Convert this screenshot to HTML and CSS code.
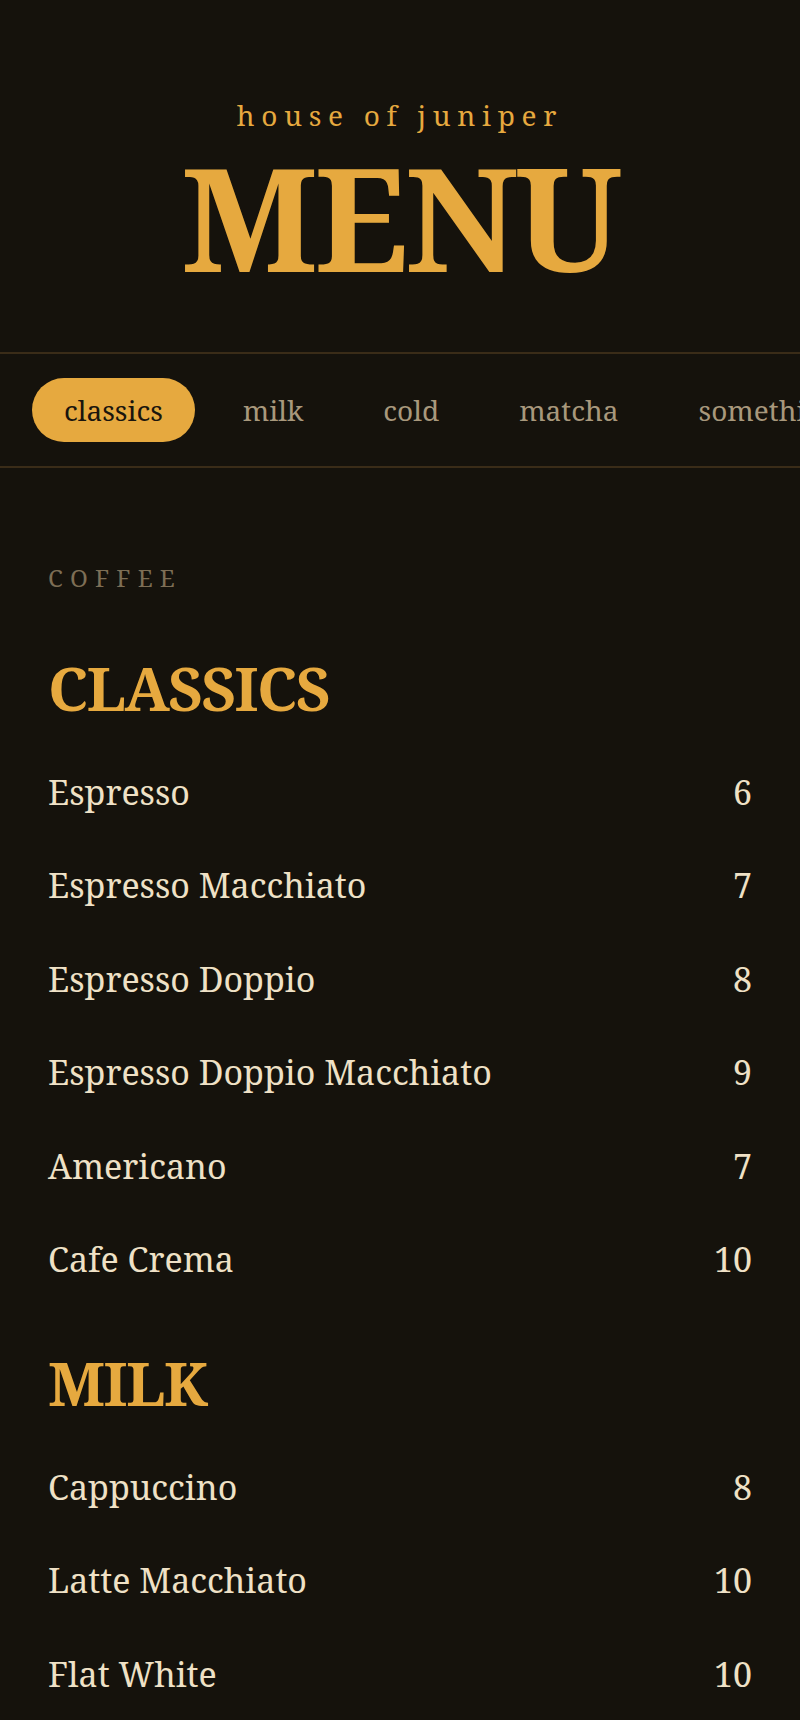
FILE: index.html
```html
<!DOCTYPE html>
<html lang="en">
<head>
  <meta charset="UTF-8">
  <title>House of Juniper - Menu</title>
  <link rel="stylesheet" href="styles.css">
</head>
<body>

  <header class="masthead">
    <p class="brand">house of juniper</p>
    <h1 class="title">MENU</h1>
  </header>

  <!-- category tabs -->
  <nav class="tabs">
    <a class="tab active" href="#classics">classics</a>
    <a class="tab" href="#milk">milk</a>
    <a class="tab" href="#cold">cold</a>
    <a class="tab" href="#matcha">matcha</a>
    <a class="tab" href="#something">something else</a>
  </nav>

  <main class="menu">
    <p class="group-label">COFFEE</p>

    <section class="category" id="classics">
      <h2>CLASSICS</h2>
      <ul class="items">
        <li><span>Espresso</span><span class="price">6</span></li>
        <li><span>Espresso Macchiato</span><span class="price">7</span></li>
        <li><span>Espresso Doppio</span><span class="price">8</span></li>
        <li><span>Espresso Doppio Macchiato</span><span class="price">9</span></li>
        <li><span>Americano</span><span class="price">7</span></li>
        <li><span>Cafe Crema</span><span class="price">10</span></li>
      </ul>
    </section>

    <section class="category" id="milk">
      <h2>MILK</h2>
      <ul class="items">
        <li><span>Cappuccino</span><span class="price">8</span></li>
        <li><span>Latte Macchiato</span><span class="price">10</span></li>
        <li><span>Flat White</span><span class="price">10</span></li>
      </ul>
    </section>
  </main>

</body>
</html>
```

FILE: styles.css
```css
body {
  margin: 0;
  background-color: #15120c;
  color: #efe1c6;
  font-family: "Noto Serif", "DejaVu Serif", serif;
}

.masthead {
  padding: 98px 0 64px;
  text-align: center;
}

.brand {
  margin: 0;
  font-size: 28px;
  line-height: 34px;
  letter-spacing: 0.24em;
  color: #e6a93f;
}

.title {
  margin: 12px 0 0;
  font-size: 144px;
  line-height: 1;
  font-weight: 700;
  letter-spacing: -0.025em;
  color: #e6a93f;
}

.tabs {
  display: flex;
  gap: 16px;
  padding: 24px 32px;
  border-top: 2px solid #3a2c18;
  border-bottom: 2px solid #3a2c18;
  overflow: hidden;
  white-space: nowrap;
}

.tab {
  flex-shrink: 0;
  padding: 14px 32px;
  font-size: 28px;
  line-height: 36px;
  color: #a8987c;
  text-decoration: none;
  border-radius: 999px;
}

.tab.active {
  background-color: #e6a93f;
  color: #1a150d;
}

.menu {
  padding: 96px 48px 40px;
}

.group-label {
  margin: 0 0 62px;
  font-size: 24px;
  line-height: 1.2;
  letter-spacing: 0.3em;
  color: #7d6e55;
}

.category + .category {
  margin-top: 43px;
}

.category h2 {
  margin: 0 0 25px;
  font-size: 60px;
  line-height: 66px;
  font-weight: 700;
  letter-spacing: -0.025em;
  color: #e6a93f;
}

.items {
  list-style: none;
  margin: 0;
  padding: 0;
}

.items li {
  display: flex;
  justify-content: space-between;
  padding: 22px 0;
  font-size: 34px;
  line-height: 49.5px;
}

.price {
  text-align: right;
}
```
